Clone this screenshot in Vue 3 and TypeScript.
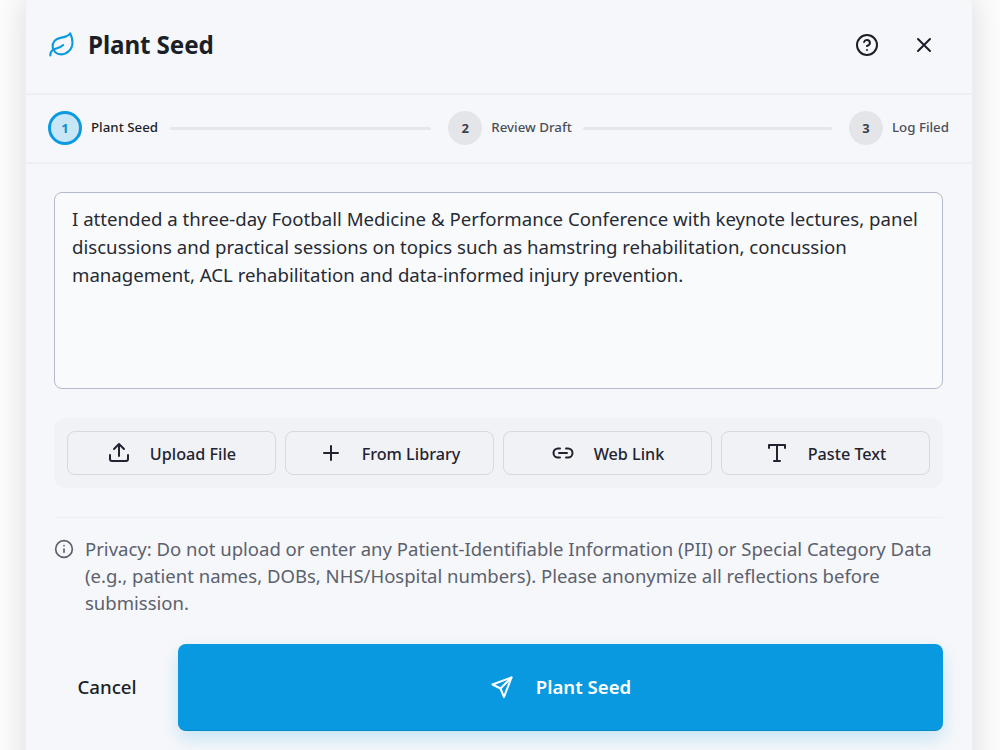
<script setup lang="ts">
const steps = [
  { n: 1, label: 'Plant Seed', active: true },
  { n: 2, label: 'Review Draft', active: false },
  { n: 3, label: 'Log Filed', active: false },
]
const text = 'I attended a three-day Football Medicine & Performance Conference with keynote lectures, panel discussions and practical sessions on topics such as hamstring rehabilitation, concussion management, ACL rehabilitation and data-informed injury prevention.'
</script>

<template>
  <div class="page">
    <section class="modal">
      <header class="head">
        <svg class="leaf" viewBox="0 0 24 24" fill="none" stroke="#0a9ae2" stroke-width="1.8" stroke-linecap="round" stroke-linejoin="round">
          <path d="M11 20A7 7 0 0 1 9.8 6.1C15.5 5 17 4.48 19 2c1 2 2 4.18 2 8 0 5.5-4.78 10-10 10Z" />
          <path d="M2 21c0-3 1.85-5.36 5.08-6C9.5 14.52 12 13 13 12" />
        </svg>
        <h1>Plant Seed</h1>
        <div class="head-actions">
          <svg class="ico-help" viewBox="0 0 24 24" fill="none" stroke="#1b1f27" stroke-width="2" stroke-linecap="round" stroke-linejoin="round">
            <circle cx="12" cy="12" r="10" />
            <path d="M9.09 9a3 3 0 0 1 5.83 1c0 2-3 3-3 3" />
            <path d="M12 17h.01" />
          </svg>
          <svg class="ico-x" viewBox="0 0 24 24" fill="none" stroke="#1b1f27" stroke-width="2" stroke-linecap="round" stroke-linejoin="round">
            <path d="M18 6 6 18M6 6l12 12" />
          </svg>
        </div>
      </header>

      <nav class="stepper">
        <template v-for="(s, i) in steps" :key="s.n">
          <div class="step" :class="{ on: s.active }">
            <span class="dot">{{ s.n }}</span>
            <span class="label">{{ s.label }}</span>
          </div>
          <span v-if="i < steps.length - 1" class="line" :class="'line' + s.n"></span>
        </template>
      </nav>

      <main class="body">
        <div class="input">{{ text }}</div>

        <div class="sources">
          <button class="src">
            <svg viewBox="0 0 24 24" fill="none" stroke="#1f2430" stroke-width="2" stroke-linecap="round" stroke-linejoin="round"><path d="M3 15v4a2 2 0 0 0 2 2h14a2 2 0 0 0 2-2v-4" transform="translate(0 -1)"/><path d="M12 3v12M7 8l5-5 5 5"/></svg>
            <span>Upload File</span>
          </button>
          <button class="src">
            <svg viewBox="0 0 24 24" fill="none" stroke="#1f2430" stroke-width="2" stroke-linecap="round"><path d="M5 12h14M12 5v14"/></svg>
            <span>From Library</span>
          </button>
          <button class="src">
            <svg viewBox="0 0 24 24" fill="none" stroke="#1f2430" stroke-width="2" stroke-linecap="round" stroke-linejoin="round"><path d="M9 16.500H7A4.500 4.500 0 0 1 7 7.500h2"/><path d="M15 7.500h2a4.500 4.500 0 1 1 0 9h-2"/><path d="M8 12h8"/></svg>
            <span>Web Link</span>
          </button>
          <button class="src">
            <svg viewBox="0 0 24 24" fill="none" stroke="#1f2430" stroke-width="2" stroke-linecap="round" stroke-linejoin="round"><path d="M4 7V4h16v3"/><path d="M12 4v16"/><path d="M9 20h6"/></svg>
            <span>Paste Text</span>
          </button>
        </div>

        <div class="privacy">
          <svg viewBox="0 0 24 24" fill="none" stroke="#5b616d" stroke-width="2" stroke-linecap="round"><circle cx="12" cy="12" r="10"/><path d="M12 16v-4M12 8h.01"/></svg>
          <p>Privacy: Do not upload or enter any Patient-Identifiable Information (PII) or Special Category Data (e.g., patient names, DOBs, NHS/Hospital numbers). Please anonymize all reflections before submission.</p>
        </div>

        <footer class="foot">
          <button class="cancel">Cancel</button>
          <button class="primary">
            <svg viewBox="0 0 24 24" fill="none" stroke="#fff" stroke-width="2" stroke-linecap="round" stroke-linejoin="round"><path d="M21.5 2.500 2.500 9.500l8 4 3.500 8.500z"/><path d="m21.500 2.500-11 11"/></svg>
            <span>Plant Seed</span>
          </button>
        </footer>
      </main>
    </section>
  </div>
</template>

<style>
html, body { margin: 0; background: #fdfdfe; }
</style>

<style scoped>
.page {
  width: 1000px;
  height: 750px;
  overflow: hidden;
  padding-left: 25px;
  box-sizing: border-box;
  font-family: "Noto Sans", "Open Sans", sans-serif;
  color: #1b1f27;
}
.modal {
  width: 948px;
  height: 800px;
  margin-top: -7px;
  background: #f6f7fa;
  border: 1px solid #eceef1;
  border-width: 0 1px;
  border-radius: 12px;
  box-sizing: border-box;
  box-shadow: 0 0 34px rgba(0, 0, 0, 0.14);
}
.head {
  height: 102px;
  padding: 4px 36px 0 22px;
  box-sizing: border-box;
  display: flex;
  align-items: center;
  border-bottom: 2px solid #eeeff2;
}
.leaf { width: 28px; height: 28px; margin-right: 12px; }
h1 { margin: 0; font-size: 24.2px; font-weight: 700; line-height: 32px; letter-spacing: -0.1px; }
.head-actions { margin-left: auto; display: flex; align-items: center; gap: 33px; }
.ico-help { width: 24px; height: 24px; }
.ico-x { width: 24px; height: 24px; }
.stepper {
  height: 69px;
  padding: 0 23px 1px 22px;
  box-sizing: border-box;
  display: flex;
  align-items: center;
  border-bottom: 2px solid #eeeff2;
}
.step { display: flex; align-items: center; gap: 9px; flex: none; }
.dot {
  width: 34px;
  height: 34px;
  border-radius: 50%;
  background: #e4e5e9;
  color: #3c414c;
  font-size: 13px;
  font-weight: 700;
  display: flex;
  align-items: center;
  justify-content: center;
  box-sizing: border-box;
}
.label { font-size: 13.3px; font-weight: 500; color: #4a4f5a; line-height: 16px; margin-top: -2px; }
.step.on .dot { background: #c9e6f6; border: 3px solid #0a9ae2; color: #0a8fd3; }
.step.on .label { color: #1b1f27; }
.line { height: 3px; background: #e6e7eb; border-radius: 2px; margin: 0 17px 0 12px; }
.line1 { flex: 260 1 0; }
.line2 { flex: 248 1 0; margin-left: 11px; }
.body { padding: 28px 29px 0 28px; }
.input {
  height: 197px;
  box-sizing: border-box;
  padding: 12px 17px;
  background: #f9fafc;
  border: 1.5px solid #b4bacd;
  border-radius: 8px;
  font-size: 18.64px;
  line-height: 28px;
  color: #262a33;
}
.sources {
  margin-top: 29px;
  height: 70px;
  padding: 13px;
  box-sizing: border-box;
  display: grid;
  grid-template-columns: repeat(4, 1fr);
  gap: 9px;
  background: #f1f2f5;
  border-radius: 12px;
}
.src {
  display: flex;
  align-items: center;
  justify-content: center;
  gap: 19px;
  background: #f1f2f5;
  border: 1.5px solid #d8d9de;
  border-radius: 8px;
  font: 500 16.2px "Noto Sans", sans-serif;
  color: #1f2430;
  padding: 0;
}
.src span { padding-top: 1px; }
.src svg { width: 24px; height: 24px; }
.privacy {
  margin-top: 29px;
  padding-top: 18px;
  border-top: 1px solid #eeeff2;
  display: flex;
  gap: 11px;
}
.privacy svg { width: 20px; height: 20px; flex: none; margin-top: 3px; }
.privacy p { margin: -1px 0 0; font-size: 18.52px; line-height: 27px; color: #5b616d; }
.foot { margin-top: 28px; display: flex; align-items: center; gap: 18px; }
.cancel {
  width: 106px;
  height: 87px;
  background: none;
  border: 0;
  padding: 0 0 2px;
  font: 500 18.7px "Noto Sans", sans-serif;
  color: #1b1f27;
}
.primary {
  flex: 1;
  height: 87px;
  display: flex;
  align-items: center;
  justify-content: center;
  gap: 22px;
  background: #0899e0;
  border: 0;
  border-bottom: 1px solid #0787c6;
  border-radius: 8px;
  color: #fff;
  font: 600 18.6px "Noto Sans", sans-serif;
  box-shadow: 0 8px 18px rgba(8, 153, 224, 0.2);
}
.primary span { margin-top: -2px; }
.primary svg { width: 24px; height: 24px; }
</style>
